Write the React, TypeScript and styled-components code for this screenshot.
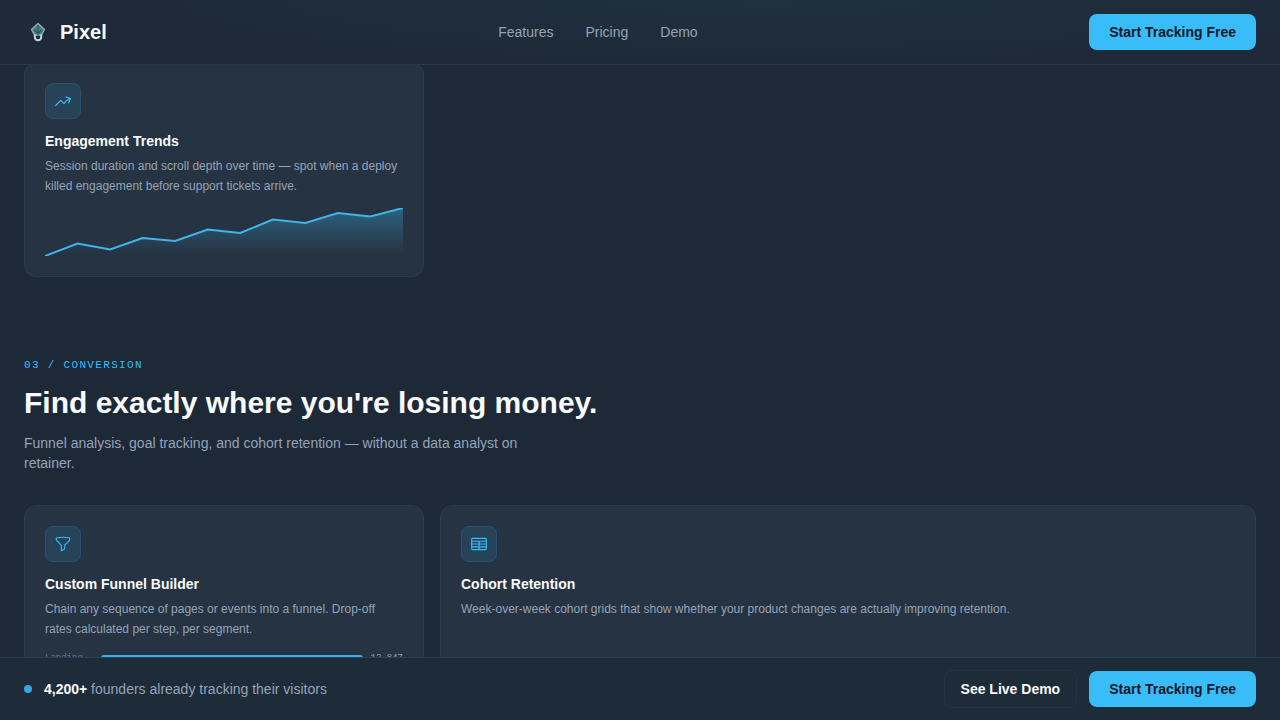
import React from "react";
import styled, { createGlobalStyle, css } from "styled-components";
import {
  HiOutlineArrowTrendingUp,
  HiOutlineFunnel,
  HiOutlineTableCells,
} from "react-icons/hi2";

const sans = `"Liberation Sans", Arial, sans-serif`;
const mono = `"Liberation Mono", "Courier New", monospace`;

const GlobalStyle = createGlobalStyle`
  *, *::before, *::after { box-sizing: border-box; }
  body { margin: 0; background: #1e2937; color: #f8fafc; font-family: ${sans}; }
  h2, h3, p { margin: 0; }
`;

const Shell = styled.div`
  display: flex;
  flex-direction: column;
  height: 100vh;
`;

const barSurface = css`
  position: relative;
  z-index: 1;
  flex: none;
  display: flex;
  align-items: center;
  justify-content: space-between;
  padding: 0 24px;
`;

const Header = styled.header`
  ${barSurface}
  height: 65px;
  border-bottom: 1px solid #2a3846;
  background: radial-gradient(ellipse 50% 100% at 60% 0, #20303f, #1e2a38);
`;

const Brand = styled.a`
  display: flex;
  align-items: center;
  gap: 8px;
  color: #f8fafc;
  font-size: 20px;
  line-height: 28px;
  font-weight: 700;
  text-decoration: none;
`;

const Nav = styled.nav`
  display: flex;
  gap: 32px;
`;

const NavLink = styled.a`
  color: #94a3b8;
  font-size: 14px;
  line-height: 20px;
  text-decoration: none;
`;

const Button = styled.button<{ $outline?: boolean }>`
  padding: 8px 20px;
  border: 0;
  border-radius: 8px;
  background: #38bdf8;
  color: #0f172a;
  font: 700 14px/20px ${sans};
  cursor: pointer;
  ${(p) =>
    p.$outline &&
    css`
      padding: 8px 16px;
      border: 1px solid #253340;
      background: transparent;
      color: #f8fafc;
    `}
`;

const Main = styled.main`
  flex: 1;
  min-height: 0;
  margin-top: -3px;
  padding: 0 24px;
  overflow-y: auto;
  scrollbar-width: none;
`;

const Section = styled.section`
  padding-bottom: 80px;
`;

const Eyebrow = styled.p`
  color: #38bdf8;
  font: 400 11px/16px ${mono};
  letter-spacing: 0.12em;
  text-transform: uppercase;
`;

const Heading = styled.h2`
  margin-top: 12px;
  font-size: 30px;
  line-height: 36px;
  font-weight: 700;
`;

const Lead = styled.p`
  max-width: 512px;
  margin: 12px 0 32px;
  color: #94a3b8;
  font-size: 14px;
  line-height: 20px;
`;

const CardGrid = styled.div`
  display: grid;
  grid-template-columns: repeat(3, minmax(0, 1fr));
  gap: 16px;
`;

const Card = styled.article<{ $wide?: boolean }>`
  grid-column: span ${(p) => (p.$wide ? 2 : 1)};
  padding: 20px;
  border: 1px solid #2d3c4a;
  border-radius: 12px;
  background: #263342;
`;

const IconTile = styled.div`
  display: grid;
  place-items: center;
  width: 36px;
  height: 36px;
  border: 1px solid #29536c;
  border-radius: 8px;
  background: #264357;
  color: #38bdf8;
`;

const CardTitle = styled.h3`
  margin-top: 12px;
  font-size: 14px;
  line-height: 20px;
  font-weight: 700;
`;

const CardText = styled.p`
  margin: 5px 0 12px;
  color: #94a3b8;
  font-size: 12px;
  line-height: 20px;
`;

const Chart = styled.svg`
  display: block;
  width: 100%;
  height: 48px;
`;

const FunnelRow = styled.div`
  display: flex;
  align-items: center;
  gap: 8px;
  font: 400 9px/14px ${mono};
`;

const StepName = styled.span`
  width: 48px;
  color: #6b7a8d;
`;

const StepBar = styled.div`
  flex: 1;
  height: 6px;
  border-radius: 3px;
  background: #38b3ea;
`;

const StepCount = styled.span`
  color: #94a3b8;
`;

const Footer = styled.footer`
  ${barSurface}
  padding: 12px 24px;
  border-top: 1px solid #24435a;
  background: #1e2b39;
`;

const Proof = styled.p`
  display: flex;
  align-items: center;
  gap: 12px;
  color: #94a3b8;
  font-size: 14px;
  line-height: 20px;
`;

const Dot = styled.span`
  width: 8px;
  height: 8px;
  border-radius: 50%;
  background: #34a9de;
`;

const Strong = styled.strong`
  color: #f8fafc;
`;

const Actions = styled.div`
  display: flex;
  align-items: center;
  gap: 12px;
`;

function Logo() {
  return (
    <svg width="28" height="28" viewBox="0 0 28 28" fill="none" aria-hidden="true">
      <path d="M14 5.500 20.500 11.500 17.500 17H10.500L7.500 11.500Z" fill="#4a7d83" stroke="#86b0b3" strokeWidth="1.400" strokeLinejoin="round" />
      <path d="M14 7v10M10.500 12l3.500 3.500 3.500-3.500" stroke="#2b525b" strokeWidth="1.100" />
      <path d="M10.800 16.500v2.800a3.200 3 0 0 0 6.400 0v-2.800" stroke="#c3d6dc" strokeWidth="2" />
    </svg>
  );
}

const trend = [48, 35.5, 41.5, 30, 33, 21.5, 25, 11.5, 15, 5, 8.5, 0];
const trendLine = trend.map((y, i) => `${(i * 358) / 11},${y}`).join(" ");

function TrendChart() {
  return (
    <Chart viewBox="0 0 358 48" preserveAspectRatio="none" role="img" aria-label="Engagement rising">
      <defs>
        <linearGradient id="trend-fill" x1="0" y1="0" x2="0" y2="1">
          <stop offset="0" stopColor="#38bdf8" stopOpacity="0.35" />
          <stop offset="0.950" stopColor="#38bdf8" stopOpacity="0" />
        </linearGradient>
      </defs>
      <polygon points={`0,48 ${trendLine} 358,48`} fill="url(#trend-fill)" />
      <polyline points={trendLine} fill="none" stroke="#3fb5ea" strokeWidth="2" />
    </Chart>
  );
}

export default function App() {
  return (
    <>
      <GlobalStyle />
      <Shell>
        <Header>
          <Brand href="#">
            <Logo />
            Pixel
          </Brand>
          <Nav>
            <NavLink href="#features">Features</NavLink>
            <NavLink href="#pricing">Pricing</NavLink>
            <NavLink href="#demo">Demo</NavLink>
          </Nav>
          <Button type="button">Start Tracking Free</Button>
        </Header>
        <Main>
          <Section>
            <CardGrid>
              <Card>
                <IconTile>
                  <HiOutlineArrowTrendingUp size={18} />
                </IconTile>
                <CardTitle>Engagement Trends</CardTitle>
                <CardText>
                  Session duration and scroll depth over time — spot when a deploy killed
                  engagement before support tickets arrive.
                </CardText>
                <TrendChart />
              </Card>
            </CardGrid>
          </Section>
          <Section id="features">
            <Eyebrow>03 / Conversion</Eyebrow>
            <Heading>Find exactly where you're losing money.</Heading>
            <Lead>
              Funnel analysis, goal tracking, and cohort retention — without a data analyst
              on retainer.
            </Lead>
            <CardGrid>
              <Card>
                <IconTile>
                  <HiOutlineFunnel size={18} />
                </IconTile>
                <CardTitle>Custom Funnel Builder</CardTitle>
                <CardText>
                  Chain any sequence of pages or events into a funnel. Drop-off rates
                  calculated per step, per segment.
                </CardText>
                <FunnelRow>
                  <StepName>Landing</StepName>
                  <StepBar />
                  <StepCount>12,847</StepCount>
                </FunnelRow>
              </Card>
              <Card $wide>
                <IconTile>
                  <HiOutlineTableCells size={18} />
                </IconTile>
                <CardTitle>Cohort Retention</CardTitle>
                <CardText>
                  Week-over-week cohort grids that show whether your product changes are
                  actually improving retention.
                </CardText>
              </Card>
            </CardGrid>
          </Section>
        </Main>
        <Footer>
          <Proof>
            <Dot />
            <span>
              <Strong>4,200+</Strong> founders already tracking their visitors
            </span>
          </Proof>
          <Actions>
            <Button type="button" $outline>
              See Live Demo
            </Button>
            <Button type="button">Start Tracking Free</Button>
          </Actions>
        </Footer>
      </Shell>
    </>
  );
}
